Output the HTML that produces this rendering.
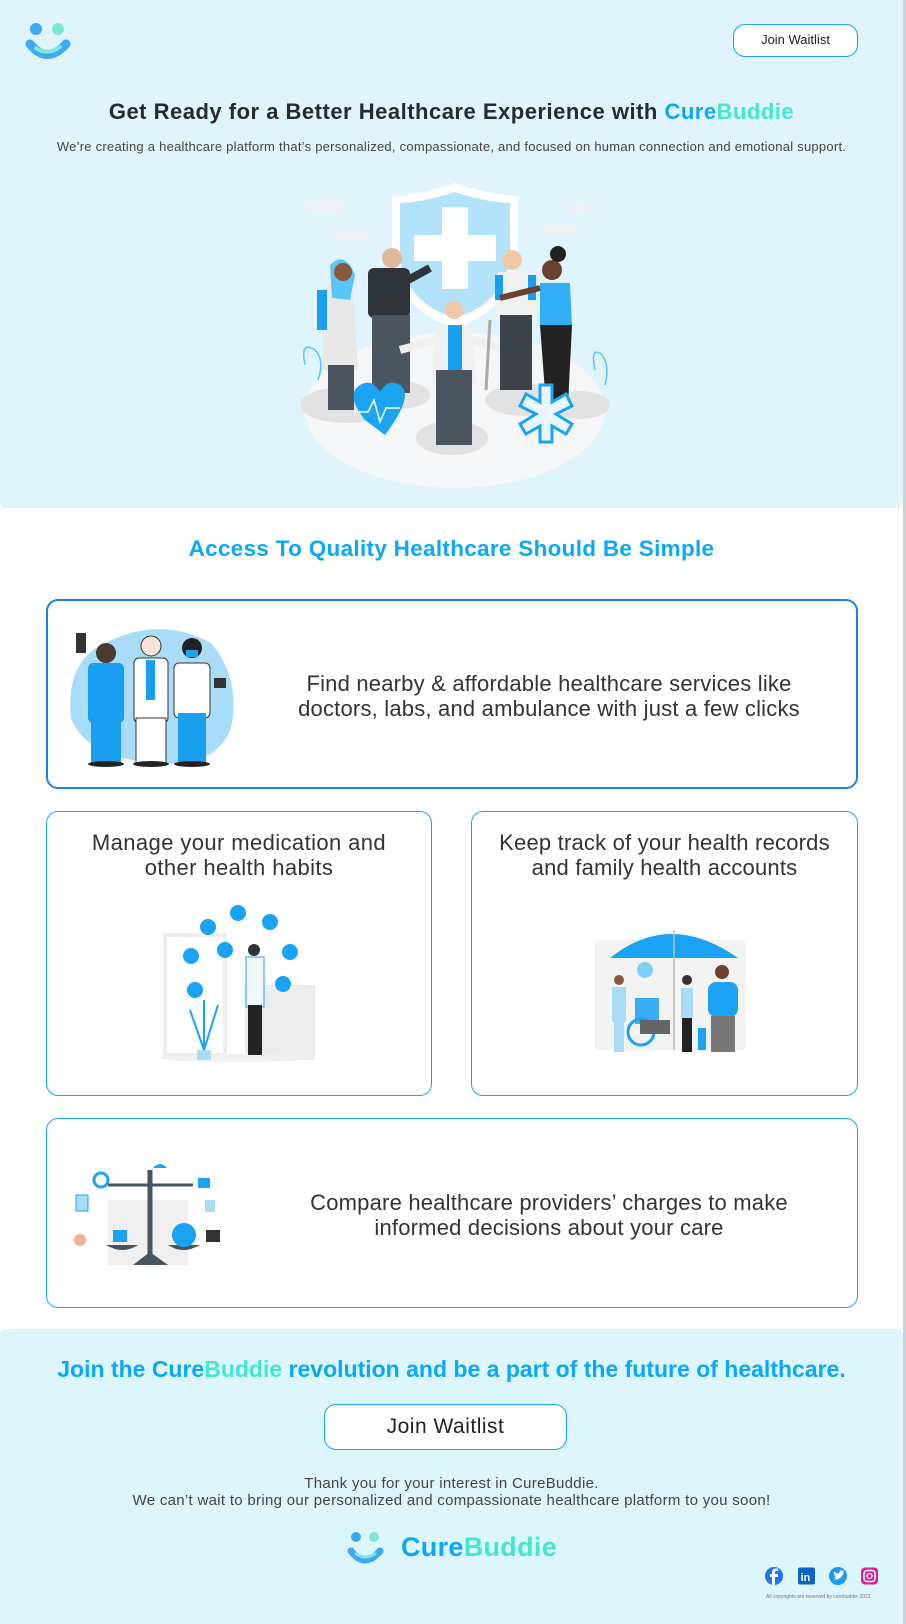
<!DOCTYPE html>
<html><head><meta charset="utf-8"><style>
*{margin:0;padding:0;box-sizing:border-box}
body{width:906px;height:1624px;background:#fff;font-family:"Liberation Sans",sans-serif;color:#2b2f33;position:relative;overflow:hidden}
.abs{position:absolute}
.hero{left:0;top:0;width:903px;height:508px;background:#e0f4fd;border-radius:0 0 6px 6px}
.rb{left:903px;top:0;width:3px;height:1624px;background:#d0d0d0}
.btn{background:#fff;border:1.5px solid #1aa3f5;border-radius:12px;text-align:center;color:#222}
.card{border:1.5px solid #1aa3f5;border-radius:12px;background:#fff}
.ct{font-size:22px;letter-spacing:0.4px;font-weight:300;color:#333;text-align:center;line-height:25px;white-space:nowrap}
.c1{color:#0aa8f5}.c2{color:#44e6cf}
.foot{left:0;top:1329px;width:903px;height:295px;background:#ddf5fd;border-radius:6px 6px 0 0}
</style></head><body>
<div class="abs hero"></div>
<div class="abs rb"></div>

<svg class="abs" style="left:24px;top:20px" width="50" height="42" viewBox="0 0 50 42">
<circle cx="12" cy="9" r="6" fill="#3ea8f5"/><circle cx="34" cy="9" r="6" fill="#7ee8d8"/>
<path d="M6 24 Q23 45 42 24" stroke="#3ea8f5" stroke-width="9" fill="none" stroke-linecap="round"/>
<path d="M12 28 Q23 36 36 27" stroke="#7ee8d8" stroke-width="4" fill="none" stroke-linecap="round"/>
</svg>
<div class="abs btn" style="left:733px;top:24px;width:125px;height:33px;line-height:30px;font-size:13px">Join Waitlist</div>

<div class="abs" style="left:0;top:99px;width:903px;text-align:center;font-size:22px;letter-spacing:0.5px;font-weight:bold;color:#252b30;white-space:nowrap">Get Ready for a Better Healthcare Experience with <span class="c1">Cure</span><span class="c2">Buddie</span></div>
<div class="abs" style="left:0;top:139px;width:903px;text-align:center;font-size:13px;letter-spacing:0.25px;color:#444;white-space:nowrap">We’re creating a healthcare platform that’s personalized, compassionate, and focused on human connection and emotional support.</div>

<svg class="abs" style="left:290px;top:180px" width="330" height="310" viewBox="0 0 330 310">
<ellipse cx="165" cy="230" rx="150" ry="78" fill="#f5f6f7"/>
<ellipse cx="55" cy="225" rx="45" ry="18" fill="#e2e2e2"/><ellipse cx="110" cy="215" rx="30" ry="14" fill="#e2e2e2"/>
<ellipse cx="235" cy="220" rx="40" ry="16" fill="#e2e2e2"/><ellipse cx="290" cy="225" rx="30" ry="14" fill="#e2e2e2"/>
<ellipse cx="162" cy="258" rx="36" ry="17" fill="#e2e2e2"/>
<path d="M165 3 Q130 15 102 16 L102 80 Q110 130 165 148 Q220 130 228 80 L228 16 Q200 15 165 3Z" fill="#fff"/>
<path d="M165 12 Q135 22 110 23 L110 80 Q118 124 165 138 Q212 124 220 80 L220 23 Q195 22 165 12Z" fill="#b3e3fb"/>
<rect x="152" y="27" width="26" height="82" fill="#fff"/><rect x="124" y="55" width="82" height="26" fill="#fff"/>
<ellipse cx="35" cy="27" rx="22" ry="7" fill="#eef1f3"/><ellipse cx="60" cy="55" rx="20" ry="6" fill="#eef1f3"/><ellipse cx="270" cy="50" rx="20" ry="6" fill="#eef1f3"/><ellipse cx="290" cy="28" rx="15" ry="5" fill="#eef1f3"/>
<path d="M45 95 Q55 80 62 100 L68 190 L32 190 L35 110Z" fill="#e8e8e8"/><path d="M40 85 Q55 70 65 95 L60 120 L42 118Z" fill="#5ac5f7"/>
<rect x="27" y="110" width="10" height="40" fill="#1a9ff0"/><circle cx="53" cy="92" r="9" fill="#8a5a3c"/>
<rect x="38" y="185" width="26" height="45" fill="#4a5560"/>
<circle cx="102" cy="78" r="10" fill="#e0b89a"/><rect x="78" y="88" width="42" height="50" rx="6" fill="#2e3438"/>
<path d="M118 100 L140 88" stroke="#2e3438" stroke-width="8"/><rect x="82" y="135" width="38" height="78" fill="#4a5560"/>
<circle cx="164" cy="130" r="9" fill="#f2c9a8"/><path d="M146 145 L182 145 L186 205 L142 205Z" fill="#f0f0f0"/><rect x="158" y="145" width="14" height="45" fill="#1a9ff0"/>
<rect x="146" y="190" width="36" height="75" fill="#4a5560"/><path d="M110 170 L146 160 M182 160 L218 170" stroke="#f0f0f0" stroke-width="8"/>
<circle cx="222" cy="80" r="10" fill="#f2c9a8"/><rect x="205" y="92" width="40" height="45" rx="6" fill="#f0f0f0"/><rect x="205" y="95" width="8" height="25" fill="#1a9ff0"/><rect x="238" y="95" width="8" height="25" fill="#1a9ff0"/>
<rect x="210" y="135" width="32" height="75" fill="#3c4349"/><line x1="200" y1="140" x2="196" y2="210" stroke="#aaa" stroke-width="3"/>
<circle cx="262" cy="90" r="10" fill="#6b4130"/><circle cx="268" cy="74" r="8" fill="#222"/><path d="M250 103 L280 103 L282 145 L250 145Z" fill="#33b0f5"/>
<path d="M250 145 L282 145 L278 225 L256 225Z" fill="#222"/><path d="M250 108 L210 118" stroke="#6b4130" stroke-width="6"/>
<path d="M75 240 Q55 215 70 205 Q82 198 90 212 Q98 198 110 205 Q125 215 95 255 Z" fill="#1ba4f2"/>
<path d="M65 232 L78 232 L84 220 L90 242 L96 228 L110 228" stroke="#fff" stroke-width="1.5" fill="none"/>
<path d="M250 205 L262 205 L262 222 L276 214 L282 226 L266 234 L282 244 L276 254 L262 246 L262 262 L250 262 L250 246 L236 254 L230 244 L246 234 L230 226 L236 214 L250 222Z" fill="#e9f6fe" stroke="#1ba4f2" stroke-width="3"/>
<path d="M15 185 Q10 160 25 170 Q35 180 28 200" stroke="#5ac5f7" fill="none" stroke-width="1.5"/><path d="M305 190 Q300 165 312 175 Q320 185 315 205" stroke="#5ac5f7" fill="none" stroke-width="1.5"/>
</svg>

<div class="abs" style="left:0;top:536px;width:903px;text-align:center;font-size:22.5px;letter-spacing:0.3px;font-weight:bold;color:#0aa8f5">Access To Quality Healthcare Should Be Simple</div>

<div class="abs card" style="left:46px;top:599px;width:812px;height:190px;border-color:#1a7fe8;border-width:2px"></div>
<svg class="abs" style="left:66px;top:618px" width="180" height="160" viewBox="0 0 180 160">
<path d="M30 30 Q90 -5 145 25 Q175 60 165 110 Q150 150 90 145 Q20 140 5 100 Q0 50 30 30Z" fill="#a8dcf8"/>
<rect x="22" y="45" width="36" height="60" rx="5" fill="#1a9ff0"/><circle cx="40" cy="35" r="10" fill="#4a3a30"/><rect x="25" y="100" width="30" height="45" fill="#1a9ff0"/>
<rect x="68" y="40" width="34" height="65" rx="5" fill="#fff" stroke="#333"/><circle cx="85" cy="28" r="10" fill="#f5e5d8" stroke="#333"/><rect x="80" y="42" width="9" height="40" fill="#1a9ff0"/><rect x="70" y="100" width="30" height="45" fill="#fff" stroke="#333"/>
<rect x="108" y="45" width="36" height="55" rx="5" fill="#fff" stroke="#333"/><circle cx="126" cy="30" r="10" fill="#222"/><rect x="120" y="32" width="12" height="7" fill="#1a9ff0"/><rect x="112" y="95" width="28" height="50" fill="#1a9ff0"/>
<ellipse cx="40" cy="146" rx="18" ry="3" fill="#222"/><ellipse cx="85" cy="146" rx="18" ry="3" fill="#222"/><ellipse cx="126" cy="146" rx="18" ry="3" fill="#222"/>
<rect x="10" y="15" width="10" height="20" fill="#333"/><rect x="148" y="60" width="12" height="10" fill="#333"/>
</svg>
<div class="abs ct" style="left:270px;top:671px;width:558px;letter-spacing:0.2px">Find nearby &amp; affordable healthcare services like<br>doctors, labs, and ambulance with just a few clicks</div>

<div class="abs card" style="left:46px;top:811px;width:386px;height:285px"></div>
<div class="abs ct" style="left:46px;top:830px;width:386px">Manage your medication and<br>other health habits</div>
<svg class="abs" style="left:150px;top:900px" width="180" height="165" viewBox="0 0 180 165">
<rect x="15" y="35" width="60" height="120" fill="none" stroke="#eee" stroke-width="4"/><rect x="95" y="85" width="70" height="75" fill="#ececec"/>
<ellipse cx="85" cy="158" rx="75" ry="4" fill="#f0f0f0"/>
<g fill="#1aa3f5"><circle cx="58" cy="27" r="8"/><circle cx="88" cy="13" r="8"/><circle cx="120" cy="22" r="8"/><circle cx="41" cy="56" r="8"/><circle cx="75" cy="50" r="8"/><circle cx="140" cy="52" r="8"/><circle cx="45" cy="90" r="8"/><circle cx="133" cy="84" r="8"/></g>
<rect x="47" y="150" width="14" height="10" fill="#a8dcf8"/><path d="M54 150 L40 110 M54 150 L68 105 M54 150 L54 100" stroke="#1aa3f5" stroke-width="2"/>
<circle cx="104" cy="50" r="6" fill="#333"/><rect x="96" y="57" width="18" height="50" fill="#f0f8fd" stroke="#1aa3f5"/><rect x="98" y="105" width="14" height="50" fill="#222"/>
</svg>

<div class="abs card" style="left:471px;top:811px;width:387px;height:285px"></div>
<div class="abs ct" style="left:471px;top:830px;width:387px;letter-spacing:0.2px">Keep track of your health records<br>and family health accounts</div>
<svg class="abs" style="left:590px;top:920px" width="165" height="145" viewBox="0 0 165 145">
<rect x="5" y="20" width="150" height="110" fill="#f3f3f3"/>
<path d="M20 38 Q80 -10 148 38Z" fill="#1aa3f5"/><line x1="84" y1="10" x2="84" y2="130" stroke="#bbb" stroke-width="1.5"/>
<circle cx="55" cy="50" r="8" fill="#7dd0fa"/>
<rect x="22" y="67" width="14" height="35" fill="#a8dcf8"/><circle cx="29" cy="60" r="5" fill="#8a5a3c"/><rect x="24" y="100" width="10" height="32" fill="#a8dcf8"/>
<rect x="45" y="78" width="24" height="26" fill="#39aef5"/><circle cx="51" cy="112" r="13" fill="none" stroke="#1aa3f5" stroke-width="3"/><rect x="50" y="100" width="30" height="14" fill="#666"/>
<rect x="91" y="68" width="12" height="30" fill="#a8dcf8"/><rect x="92" y="98" width="10" height="34" fill="#222"/><circle cx="97" cy="60" r="5" fill="#333"/>
<rect x="108" y="108" width="8" height="22" fill="#1aa3f5"/>
<rect x="118" y="62" width="30" height="35" rx="8" fill="#1aa3f5"/><rect x="121" y="96" width="24" height="36" fill="#777"/><circle cx="132" cy="52" r="7" fill="#6b4130"/>
</svg>

<div class="abs card" style="left:46px;top:1118px;width:812px;height:190px"></div>
<svg class="abs" style="left:68px;top:1160px" width="170" height="110" viewBox="0 0 170 110">
<rect x="40" y="40" width="80" height="65" fill="#f0f0f0"/>
<line x1="82" y1="10" x2="82" y2="100" stroke="#475560" stroke-width="5"/><line x1="40" y1="25" x2="125" y2="25" stroke="#475560" stroke-width="3"/>
<path d="M65 105 L82 92 L100 105Z" fill="#475560"/>
<path d="M38 85 Q55 95 70 85Z" fill="#475560"/><path d="M100 85 Q115 95 132 85Z" fill="#475560"/>
<circle cx="116" cy="75" r="12" fill="#1aa3f5"/><rect x="45" y="70" width="14" height="12" fill="#1aa3f5"/>
<circle cx="33" cy="20" r="7" fill="none" stroke="#1aa3f5" stroke-width="3"/><rect x="8" y="35" width="12" height="16" fill="#a8dcf8" stroke="#1aa3f5"/>
<path d="M85 8 Q92 0 99 8Z" fill="#1aa3f5"/><rect x="130" y="18" width="12" height="10" fill="#1aa3f5"/><rect x="137" y="40" width="10" height="12" fill="#a8dcf8"/><rect x="138" y="70" width="14" height="12" fill="#333"/><circle cx="12" cy="80" r="6" fill="#f0b39a"/>
</svg>
<div class="abs ct" style="left:270px;top:1190px;width:558px;letter-spacing:0.2px">Compare healthcare providers’ charges to make<br>informed decisions about your care</div>

<div class="abs foot"></div>
<div class="abs" style="left:0;top:1356px;width:903px;text-align:center;font-size:23px;letter-spacing:0px;font-weight:bold;color:#0aa8f5;white-space:nowrap">Join the <span class="c1">Cure</span><span class="c2">Buddie</span> revolution and be a part of the future of healthcare.</div>
<div class="abs btn" style="left:324px;top:1404px;width:243px;height:46px;line-height:43px;font-size:21px;letter-spacing:0.5px;font-weight:300">Join Waitlist</div>
<div class="abs" style="left:0;top:1475px;width:903px;text-align:center;font-size:15px;letter-spacing:0.3px;line-height:17px;color:#444;font-weight:300;white-space:nowrap">Thank you for your interest in CureBuddie.<br>We can’t wait to bring our personalized and compassionate healthcare platform to you soon!</div>

<svg class="abs" style="left:346px;top:1530px" width="40" height="36" viewBox="0 0 40 36">
<circle cx="10" cy="7" r="5" fill="#3ea8f5"/><circle cx="28" cy="7" r="5" fill="#7ee8d8"/>
<path d="M5 21 Q19 39 34 21" stroke="#3ea8f5" stroke-width="7" fill="none" stroke-linecap="round"/>
<path d="M10 24 Q19 30 29 24" stroke="#7ee8d8" stroke-width="3" fill="none" stroke-linecap="round"/>
</svg>
<div class="abs" style="left:401px;top:1532px;font-size:27px;letter-spacing:0.3px;font-weight:bold"><span class="c1">Cure</span><span class="c2">Buddie</span></div>

<svg class="abs" style="left:764px;top:1566px" width="120" height="20" viewBox="0 0 120 20">
<circle cx="10" cy="10" r="9" fill="#1877f2"/><path d="M11 19 L11 11 L14 11 L14 8 L11 8 L11 6 Q11 5 12.5 5 L14 5 L14 2.5 L12 2.5 Q8 2.5 8 6 L8 8 L6 8 L6 11 L8 11 L8 19Z" fill="#fff"/>
<rect x="34" y="1.5" width="17" height="17" rx="2" fill="#0a66c2"/><text x="36.5" y="15" font-size="11" font-weight="bold" fill="#fff" font-family="Liberation Sans">in</text>
<circle cx="74" cy="10" r="9" fill="#1d9bf0"/><path d="M69 13 Q74 15 78 10 Q80 8 79 6 L80.5 5 L79 5 Q77 3.5 75.5 5.5 Q75 7 75.2 7.5 Q72 7.5 70 5.5 Q69.5 7.5 71 8.5 L70 8.3 Q70.5 10 72 10.5 Q71 11 70 10.8 Q71 12.5 73 12.5Z" fill="#fff"/>
<rect x="97" y="1.5" width="17" height="17" rx="4" fill="#d6249f"/><rect x="100" y="4.5" width="11" height="11" rx="3" fill="none" stroke="#fff" stroke-width="1.5"/><circle cx="105.5" cy="10" r="2.5" fill="none" stroke="#fff" stroke-width="1.3"/>
</svg>
<div class="abs" style="left:766px;top:1594px;font-size:5px;color:#777">All copyrights are reserved by curebuddie 2023</div>
</body></html>
